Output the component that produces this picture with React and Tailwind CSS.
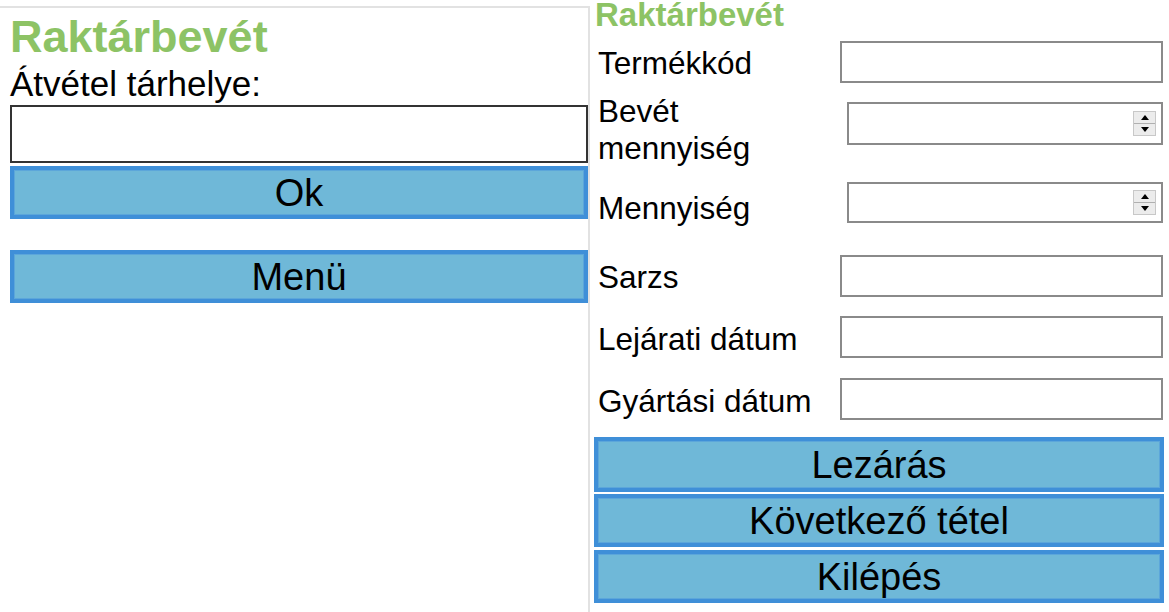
import React from "react";

const font = { fontFamily: '"Liberation Sans", Arial, sans-serif' };

function Gomb({ children, className = "" }) {
    return (
        <button className={`flex items-center justify-center w-full bg-[#6fb8d8] border-4 border-[#3f8fd8] shadow-[inset_0_0_0_1px_#5ca6da] text-[38px] leading-none text-black ${className}`}>
            {children}
        </button>
    );
}

function Spinner() {
    return (
        <div className="flex flex-col w-[23px] h-[25px] mr-[5px] bg-[#ececec] border border-[#c8c8c8]">
            <div className="flex-1 flex items-center justify-center border-b border-[#b0b0b0]">
                <div className="w-0 h-0 border-l-[4px] border-r-[4px] border-b-[5px] border-l-transparent border-r-transparent border-b-black"></div>
            </div>
            <div className="flex-1 flex items-center justify-center">
                <div className="w-0 h-0 border-l-[4px] border-r-[4px] border-t-[5px] border-l-transparent border-r-transparent border-t-black"></div>
            </div>
        </div>
    );
}

function SzamMezo({ className = "" }) {
    return (
        <div className={`flex items-center w-[316px] ml-[257px] border-2 border-[#8a8a8a] bg-white ${className}`}>
            <input type="text" className="flex-1 h-full outline-none px-2 text-[20px]" />
            <Spinner />
        </div>
    );
}

function Mezo() {
    return <input type="text" className="block w-[323px] h-[42px] ml-[250px] border-2 border-[#8a8a8a] bg-white outline-none px-2 text-[20px]" />;
}

function Cimke({ children, top, className = "" }) {
    return <span className={`absolute left-[8px] text-[31.5px] leading-[37px] ${top} ${className}`}>{children}</span>;
}

export default function App() {
    return (
        <div className="flex h-[612px] w-[1169px] bg-white text-black overflow-hidden" style={font}>
            {/* bal oldal */}
            <section className="flex flex-col w-[590px] shrink-0 mt-[6px] border-t-2 border-r-2 border-[#e2e2e2] pl-[10px]">
                <h1 className="mt-[6px] text-[45px] leading-[45px] font-bold text-[#8dc365]">Raktárbevét</h1>
                <p className="mt-[7px] text-[35px] leading-[35px]">Átvétel tárhelye:</p>
                <input type="text" className="block mt-[4px] w-full h-[58px] border-2 border-[#333] outline-none px-2 text-[24px]" />
                <Gomb className="mt-[3px] h-[53px]">Ok</Gomb>
                <Gomb className="mt-[31px] h-[53px]">Menü</Gomb>
            </section>

            {/* jobb oldal */}
            <section className="flex flex-col flex-1 pr-[5px]">
                <h2 className="h-[41px] text-[33px] leading-[30px] font-bold text-[#8dc365] pl-[5px]">Raktárbevét</h2>

                <div className="relative flex flex-col h-[52px]">
                    <Cimke top="top-[4px]">Termékkód</Cimke>
                    <Mezo />
                </div>
                <div className="relative flex flex-col h-[87px]">
                    <Cimke top="top-0" className="w-[230px]">Bevét mennyiség</Cimke>
                    <SzamMezo className="mt-[9px] h-[43px]" />
                </div>
                <div className="relative flex flex-col h-[75px]">
                    <Cimke top="top-[10px]">Mennyiség</Cimke>
                    <SzamMezo className="mt-[2px] h-[41px]" />
                </div>
                <div className="relative flex flex-col h-[61px]">
                    <Cimke top="top-[4px]">Sarzs</Cimke>
                    <Mezo />
                </div>
                <div className="relative flex flex-col h-[62px]">
                    <Cimke top="top-[5px]">Lejárati dátum</Cimke>
                    <Mezo />
                </div>
                <div className="relative flex flex-col h-[59px]">
                    <Cimke top="top-[5px]">Gyártási dátum</Cimke>
                    <Mezo />
                </div>

                <div className="flex flex-col pl-[4px]">
                    <Gomb className="h-[55px]">Lezárás</Gomb>
                    <Gomb className="mt-[2px] h-[53px]">Következő tétel</Gomb>
                    <Gomb className="mt-[3px] h-[53px]">Kilépés</Gomb>
                </div>
            </section>
        </div>
    );
}
